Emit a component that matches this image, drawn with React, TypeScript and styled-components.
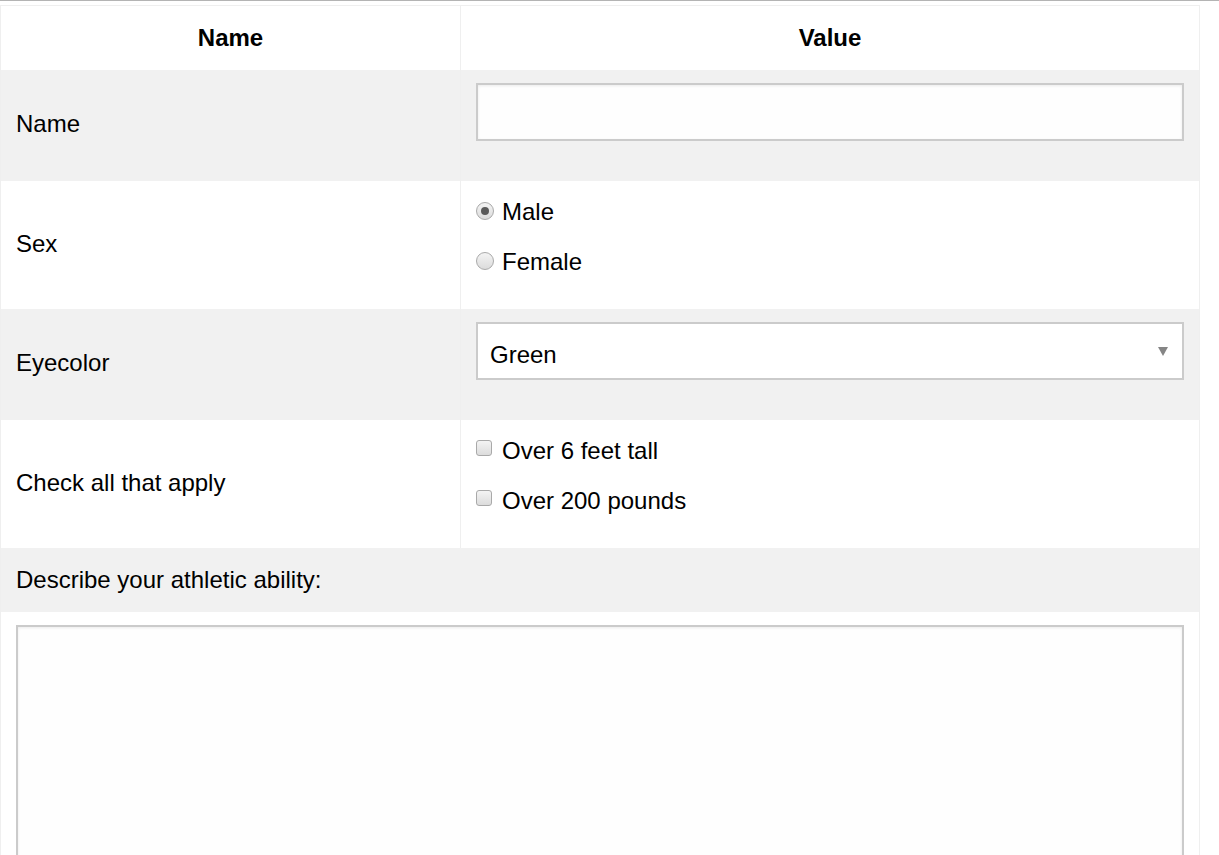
import React from "react";
import styled, { createGlobalStyle } from "styled-components";

const Global = createGlobalStyle`
  html, body { margin: 0; padding: 0; background: #fff; }
  body { font-family: "Liberation Sans", Arial, sans-serif; font-size: 24px; color: #000; }
  * { box-sizing: border-box; }
`;

const TopRule = styled.div`
  height: 1px;
  background: #b4b4b4;
  margin-bottom: 4px;
`;

const Table = styled.div`
  width: 1200px;
  border: 1px solid #efefef;
  border-bottom: none;
`;

const Row = styled.div<{ $shade?: boolean; $h: number }>`
  display: grid;
  grid-template-columns: 459px 1fr;
  height: ${(p) => p.$h}px;
  background: ${(p) => (p.$shade ? "#f1f1f1" : "#fff")};
`;

const FullRow = styled.div<{ $shade?: boolean; $h: number }>`
  height: ${(p) => p.$h}px;
  background: ${(p) => (p.$shade ? "#f1f1f1" : "#fff")};
  display: flex;
  align-items: center;
  padding-left: 15px;
`;

const HeadCell = styled.div<{ $divider?: boolean }>`
  display: flex;
  align-items: center;
  justify-content: center;
  font-weight: bold;
  padding-bottom: 1px;
  border-left: ${(p) => (p.$divider ? "1px solid #efefef" : "none")};
`;

const LabelCell = styled.div`
  display: flex;
  align-items: center;
  padding-left: 15px;
  padding-bottom: 3px;
`;

const ValueCell = styled.div<{ $top: number; $gap?: number }>`
  border-left: 1px solid #efefef;
  padding: ${(p) => p.$top}px 15px 0 15px;
  display: flex;
  flex-direction: column;
  gap: ${(p) => p.$gap ?? 0}px;
`;

const TextInput = styled.input`
  width: 708px;
  height: 58px;
  border: 2px solid #cbcbcb;
  background: #fefefe;
  box-shadow: inset 0 1px 3px rgba(0, 0, 0, 0.08);
  font: inherit;
  padding: 0 12px;
  outline: none;
`;

const Option = styled.label`
  display: flex;
  align-items: center;
  height: 24px;
  gap: 8px;
  cursor: pointer;
`;

const Radio = styled.input`
  appearance: none;
  margin: 0;
  width: 18px;
  height: 18px;
  border-radius: 50%;
  border: 1px solid #a9a9a9;
  background: linear-gradient(#f4f4f4, #dcdcdc);
  position: relative;
  top: -1px;
  &:checked::after {
    content: "";
    position: absolute;
    left: 4px;
    top: 4px;
    width: 8px;
    height: 8px;
    border-radius: 50%;
    background: #5a5a5a;
  }
`;

const Check = styled.input`
  appearance: none;
  margin: 0 2px 0 0;
  width: 16px;
  height: 16px;
  border-radius: 3px;
  border: 1px solid #a9a9a9;
  background: linear-gradient(#f4f4f4, #dcdcdc);
  position: relative;
  top: -3px;
`;

const SelectWrap = styled.div`
  position: relative;
  width: 708px;
  height: 58px;
`;

const Select = styled.select`
  appearance: none;
  width: 100%;
  height: 100%;
  border: 2px solid #cbcbcb;
  background: #fff;
  font: inherit;
  color: #000;
  padding: 6px 12px 0 12px;
  outline: none;
  border-radius: 0;
`;

const Caret = styled.span`
  position: absolute;
  right: 16px;
  top: 25px;
  width: 0;
  height: 0;
  border-left: 5px solid transparent;
  border-right: 5px solid transparent;
  border-top: 9px solid #858585;
  pointer-events: none;
`;

const AreaRow = styled.div`
  background: #fff;
  padding: 13px 15px 0 15px;
  height: 243px;
  overflow: hidden;
`;

const TextArea = styled.textarea`
  display: block;
  width: 1168px;
  height: 300px;
  border: 2px solid #cbcbcb;
  background: #fefefe;
  box-shadow: inset 0 1px 3px rgba(0, 0, 0, 0.08);
  resize: none;
  font: inherit;
  outline: none;
`;

export default function App() {
  return (
    <>
      <Global />
      <TopRule />
      <Table>
        <Row $h={64}>
          <HeadCell>Name</HeadCell>
          <HeadCell $divider>Value</HeadCell>
        </Row>
        <Row $shade $h={111}>
          <LabelCell>Name</LabelCell>
          <ValueCell $top={13}>
            <TextInput type="text" />
          </ValueCell>
        </Row>
        <Row $h={128}>
          <LabelCell>Sex</LabelCell>
          <ValueCell $top={19} $gap={26}>
            <Option>
              <Radio type="radio" name="sex" defaultChecked />
              Male
            </Option>
            <Option>
              <Radio type="radio" name="sex" />
              Female
            </Option>
          </ValueCell>
        </Row>
        <Row $shade $h={111}>
          <LabelCell>Eyecolor</LabelCell>
          <ValueCell $top={13}>
            <SelectWrap>
              <Select defaultValue="Green">
                <option>Blue</option>
                <option>Brown</option>
                <option>Green</option>
                <option>Hazel</option>
              </Select>
              <Caret />
            </SelectWrap>
          </ValueCell>
        </Row>
        <Row $h={128}>
          <LabelCell>Check all that apply</LabelCell>
          <ValueCell $top={19} $gap={26}>
            <Option>
              <Check type="checkbox" />
              Over 6 feet tall
            </Option>
            <Option>
              <Check type="checkbox" />
              Over 200 pounds
            </Option>
          </ValueCell>
        </Row>
        <FullRow $shade $h={64}>Describe your athletic ability:</FullRow>
        <AreaRow>
          <TextArea />
        </AreaRow>
      </Table>
    </>
  );
}
